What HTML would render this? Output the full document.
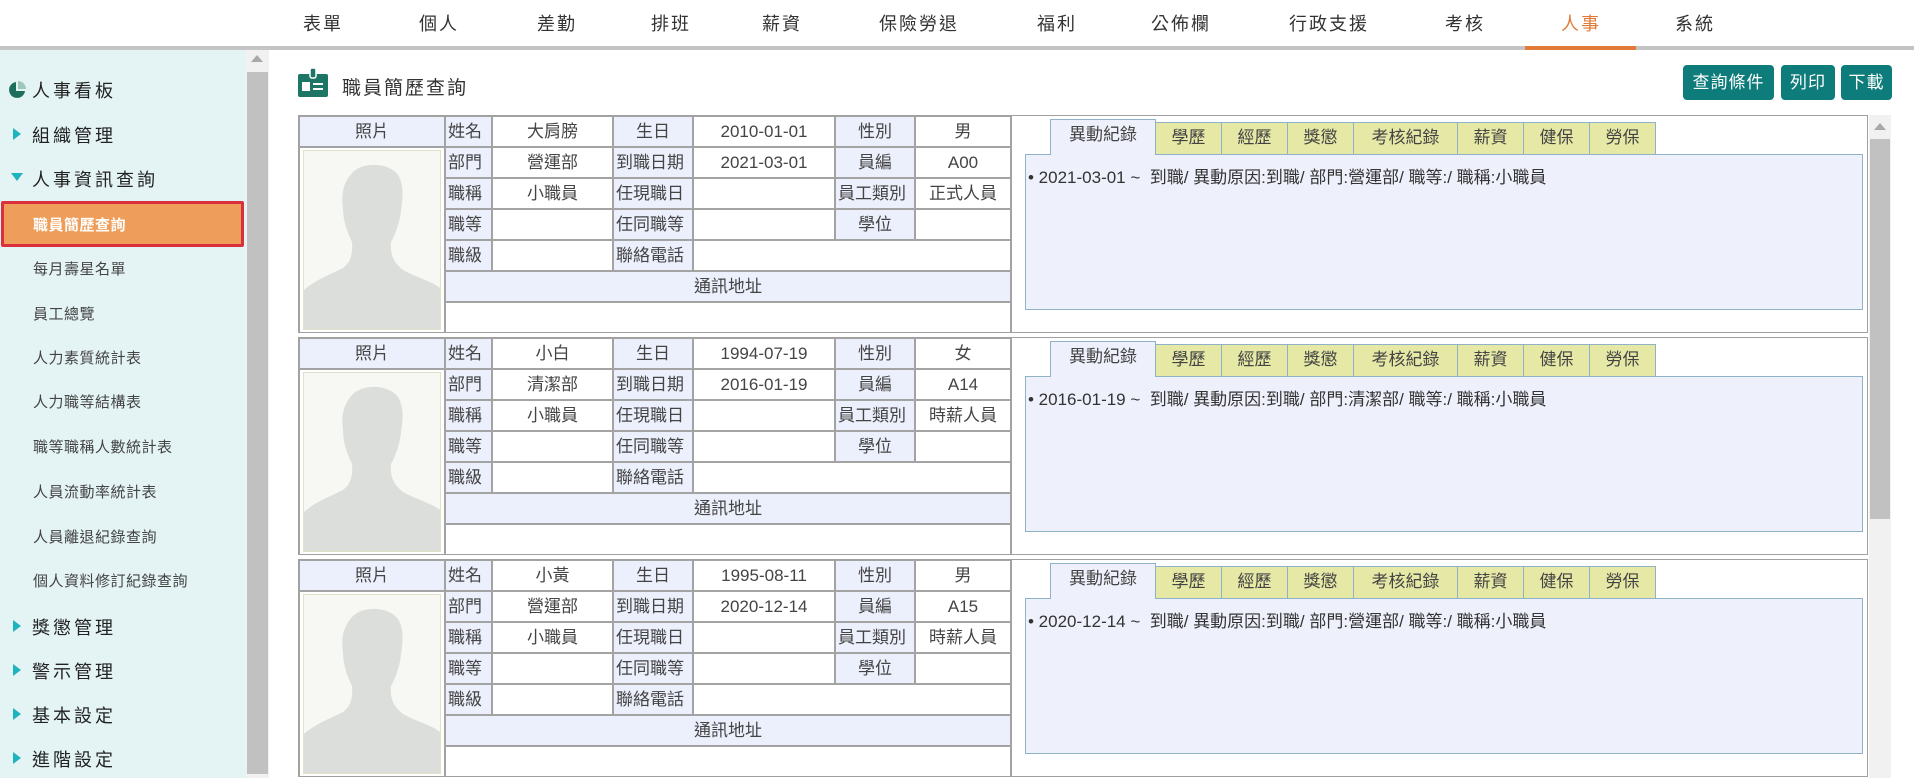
<!DOCTYPE html>
<html><head><meta charset="utf-8"><style>
*{box-sizing:border-box;margin:0;padding:0}
body{width:1914px;height:778px;overflow:hidden;background:#fff;font-family:"Liberation Sans","Noto Sans CJK TC",sans-serif;color:#333;position:relative}
.nav{position:absolute;top:0;left:0;width:1914px;height:46px}
.nav span{position:absolute;top:10px;font-size:18px;color:#333;transform:translateX(-50%);letter-spacing:2px;white-space:nowrap}
.navline{position:absolute;top:46px;left:0;width:1914px;height:4px;background:#c4c4c4}
.navact{position:absolute;top:46px;left:1525px;width:111px;height:4px;background:#e07b39}
.side{position:absolute;top:50px;left:0;width:246px;height:728px;background:#e4f4f5}
.side div{position:absolute;white-space:nowrap}
.m{left:32px;font-size:18px;color:#222;letter-spacing:3px}
.s{left:33px;font-size:15px;color:#444;letter-spacing:.5px}
.tri{position:absolute;left:13px;width:0;height:0;border-top:6px solid transparent;border-bottom:6px solid transparent;border-left:8px solid #1fb3bd}
.sb{position:absolute;top:50px;left:246px;width:23px;height:728px;background:#f1f1f1}
.sbt{position:absolute;top:72px;left:247px;width:21px;height:702px;background:#c1c1c1}
.btn{position:absolute;top:65px;height:35px;background:#0e7c7b;color:#fff;font-size:17px;border-radius:4px;text-align:center;line-height:35px;letter-spacing:1px}
.card{position:absolute;left:298px;width:1570px;height:218px;border:1px solid #a0a0a0;background:#fff;overflow:hidden}
table{border-collapse:collapse;position:absolute;left:-1px;top:-1px;table-layout:fixed}
td{border:2px solid #a3a3a3;height:31px;line-height:27px;font-size:17px;text-align:center;color:#444;white-space:nowrap;overflow:hidden;padding:0}
td.h{background:#eceffc}
td.l{text-align:left;padding-left:2px}
.tabs{position:absolute;left:751px;top:3px;height:35px}
.tab{position:absolute;top:3px;height:32px;background:#e6e8a6;border:1px solid #8fb2c9;border-bottom:none;font-size:17px;text-align:center;line-height:30px;color:#444}
.tab.a{top:0;height:36px;background:#eef0fc;z-index:2}
.box{position:absolute;left:726px;top:38px;width:838px;height:156px;background:#eef0fc;border:1px solid #8fb2c9;font-size:17px;color:#333;padding:8px 0 0 2px;white-space:nowrap}
</style></head><body>
<div class="nav">
<span style="left:323px">表單</span><span style="left:439px">個人</span><span style="left:557px">差勤</span><span style="left:671px">排班</span><span style="left:782px">薪資</span><span style="left:919px">保險勞退</span><span style="left:1057px">福利</span><span style="left:1181px">公佈欄</span><span style="left:1329px">行政支援</span><span style="left:1465px">考核</span><span style="left:1581px;color:#e07b39">人事</span><span style="left:1695px">系統</span>
</div>
<div class="navline"></div><div class="navact"></div>
<div class="side">
<svg style="position:absolute;left:7px;top:30px" width="20" height="20" viewBox="0 0 20 20"><path d="M9 2 A8 8 0 1 0 18 11 L9 11 Z" fill="#1d6e5c"/><path d="M11 1 A8 8 0 0 1 19 9 L11 9 Z" fill="#9cc8b9"/></svg>
<div class="m" style="top:27px">人事看板</div>
<div class="tri" style="top:78px"></div><div class="m" style="top:72px">組織管理</div>
<div style="position:absolute;left:11px;top:123px;width:0;height:0;border-left:6px solid transparent;border-right:6px solid transparent;border-top:8px solid #1fb3bd"></div>
<div class="m" style="top:116px">人事資訊查詢</div>
<div style="left:1px;top:151px;width:243px;height:46px;background:#ee9e5a;border:3px solid #d9303b;border-radius:2px"></div>
<div class="s" style="top:164px;color:#fff;font-weight:bold">職員簡歷查詢</div>
<div class="s" style="top:208px">每月壽星名單</div>
<div class="s" style="top:253px">員工總覽</div>
<div class="s" style="top:297px">人力素質統計表</div>
<div class="s" style="top:341px">人力職等結構表</div>
<div class="s" style="top:386px">職等職稱人數統計表</div>
<div class="s" style="top:431px">人員流動率統計表</div>
<div class="s" style="top:476px">人員離退紀錄查詢</div>
<div class="s" style="top:520px">個人資料修訂紀錄查詢</div>
<div class="tri" style="top:570px"></div><div class="m" style="top:564px">獎懲管理</div>
<div class="tri" style="top:614px"></div><div class="m" style="top:608px">警示管理</div>
<div class="tri" style="top:658px"></div><div class="m" style="top:652px">基本設定</div>
<div class="tri" style="top:702px"></div><div class="m" style="top:696px">進階設定</div>
</div>
<div class="sb"></div><div class="sbt"></div>
<div style="position:absolute;left:251px;top:55px;width:0;height:0;border-left:6px solid transparent;border-right:6px solid transparent;border-bottom:7px solid #a8a8a8"></div>
<svg style="position:absolute;left:298px;top:67px" width="30" height="30" viewBox="0 0 30 30"><rect x="0" y="7" width="30" height="23" rx="2" fill="#1d7565"/><rect x="12" y="1" width="6" height="10" rx="2" fill="#1d7565" stroke="#fff" stroke-width="1.5"/><rect x="4" y="15" width="8" height="9" fill="#fff"/><rect x="15" y="16" width="10" height="2" fill="#fff"/><rect x="15" y="21" width="10" height="2" fill="#fff"/></svg>
<div style="position:absolute;left:342px;top:73px;font-size:19px;color:#333;letter-spacing:2px">職員簡歷查詢</div>
<div class="btn" style="left:1683px;width:91px">查詢條件</div>
<div class="btn" style="left:1781px;width:54px">列印</div>
<div class="btn" style="left:1841px;width:51px">下載</div>
<div style="position:absolute;left:1869px;top:115px;width:22px;height:663px;background:#f1f1f1"></div>
<div style="position:absolute;left:1870px;top:139px;width:20px;height:380px;background:#c1c1c1"></div>
<div style="position:absolute;left:1874px;top:123px;width:0;height:0;border-left:6px solid transparent;border-right:6px solid transparent;border-bottom:7px solid #a8a8a8"></div>

<!-- card 1 -->
<div class="card" style="top:115px">
<table style="width:712px"><colgroup><col style="width:146px"><col style="width:47px"><col style="width:121px"><col style="width:80px"><col style="width:142px"><col style="width:80px"><col style="width:96px"></colgroup>
<tr><td class="h">照片</td><td class="h l">姓名</td><td>大肩膀</td><td class="h">生日</td><td>2010-01-01</td><td class="h">性別</td><td>男</td></tr>
<tr><td rowspan="6" style="padding:2px;vertical-align:top;line-height:0"><svg width="138" height="180" viewBox="0 0 138 180" preserveAspectRatio="none"><rect x="0.5" y="0.5" width="137" height="179" fill="#f7f7f3" stroke="#e2e2c8"/><path d="M50 22 C60 12 85 12 95 25 C101 35 100 48 98 60 C97 72 92 85 88 92 C87 104 90 112 100 120 C115 128 130 132 137 138 L137 179 L1 179 L1 140 C12 130 28 124 40 118 C48 112 50 103 49 92 C44 82 40 70 40 58 C38 45 40 32 50 22 Z" fill="#dcdedb"/></svg></td><td class="h l">部門</td><td>營運部</td><td class="h l">到職日期</td><td>2021-03-01</td><td class="h">員編</td><td>A00</td></tr>
<tr><td class="h l">職稱</td><td>小職員</td><td class="h l">任現職日</td><td></td><td class="h l">員工類別</td><td>正式人員</td></tr>
<tr><td class="h l">職等</td><td></td><td class="h l">任同職等</td><td></td><td class="h">學位</td><td></td></tr>
<tr><td class="h l">職級</td><td></td><td class="h l">聯絡電話</td><td colspan="3"></td></tr>
<tr><td class="h" colspan="6">通訊地址</td></tr>
<tr><td colspan="6"></td></tr>
</table>
<div class="tabs"><div class="tab a" style="left:0;width:106px">異動紀錄</div><div class="tab" style="left:105px;width:67px">學歷</div><div class="tab" style="left:171px;width:67px">經歷</div><div class="tab" style="left:237px;width:67px">獎懲</div><div class="tab" style="left:303px;width:105px">考核紀錄</div><div class="tab" style="left:407px;width:67px">薪資</div><div class="tab" style="left:473px;width:67px">健保</div><div class="tab" style="left:539px;width:67px">勞保</div></div>
<div class="box">• 2021-03-01 ~ &nbsp;到職/ 異動原因:到職/ 部門:營運部/ 職等:/ 職稱:小職員</div>
</div>

<!-- card 2 -->
<div class="card" style="top:337px">
<table style="width:712px"><colgroup><col style="width:146px"><col style="width:47px"><col style="width:121px"><col style="width:80px"><col style="width:142px"><col style="width:80px"><col style="width:96px"></colgroup>
<tr><td class="h">照片</td><td class="h l">姓名</td><td>小白</td><td class="h">生日</td><td>1994-07-19</td><td class="h">性別</td><td>女</td></tr>
<tr><td rowspan="6" style="padding:2px;vertical-align:top;line-height:0"><svg width="138" height="180" viewBox="0 0 138 180" preserveAspectRatio="none"><rect x="0.5" y="0.5" width="137" height="179" fill="#f7f7f3" stroke="#e2e2c8"/><path d="M50 22 C60 12 85 12 95 25 C101 35 100 48 98 60 C97 72 92 85 88 92 C87 104 90 112 100 120 C115 128 130 132 137 138 L137 179 L1 179 L1 140 C12 130 28 124 40 118 C48 112 50 103 49 92 C44 82 40 70 40 58 C38 45 40 32 50 22 Z" fill="#dcdedb"/></svg></td><td class="h l">部門</td><td>清潔部</td><td class="h l">到職日期</td><td>2016-01-19</td><td class="h">員編</td><td>A14</td></tr>
<tr><td class="h l">職稱</td><td>小職員</td><td class="h l">任現職日</td><td></td><td class="h l">員工類別</td><td>時薪人員</td></tr>
<tr><td class="h l">職等</td><td></td><td class="h l">任同職等</td><td></td><td class="h">學位</td><td></td></tr>
<tr><td class="h l">職級</td><td></td><td class="h l">聯絡電話</td><td colspan="3"></td></tr>
<tr><td class="h" colspan="6">通訊地址</td></tr>
<tr><td colspan="6"></td></tr>
</table>
<div class="tabs"><div class="tab a" style="left:0;width:106px">異動紀錄</div><div class="tab" style="left:105px;width:67px">學歷</div><div class="tab" style="left:171px;width:67px">經歷</div><div class="tab" style="left:237px;width:67px">獎懲</div><div class="tab" style="left:303px;width:105px">考核紀錄</div><div class="tab" style="left:407px;width:67px">薪資</div><div class="tab" style="left:473px;width:67px">健保</div><div class="tab" style="left:539px;width:67px">勞保</div></div>
<div class="box">• 2016-01-19 ~ &nbsp;到職/ 異動原因:到職/ 部門:清潔部/ 職等:/ 職稱:小職員</div>
</div>

<!-- card 3 -->
<div class="card" style="top:559px">
<table style="width:712px"><colgroup><col style="width:146px"><col style="width:47px"><col style="width:121px"><col style="width:80px"><col style="width:142px"><col style="width:80px"><col style="width:96px"></colgroup>
<tr><td class="h">照片</td><td class="h l">姓名</td><td>小黃</td><td class="h">生日</td><td>1995-08-11</td><td class="h">性別</td><td>男</td></tr>
<tr><td rowspan="6" style="padding:2px;vertical-align:top;line-height:0"><svg width="138" height="180" viewBox="0 0 138 180" preserveAspectRatio="none"><rect x="0.5" y="0.5" width="137" height="179" fill="#f7f7f3" stroke="#e2e2c8"/><path d="M50 22 C60 12 85 12 95 25 C101 35 100 48 98 60 C97 72 92 85 88 92 C87 104 90 112 100 120 C115 128 130 132 137 138 L137 179 L1 179 L1 140 C12 130 28 124 40 118 C48 112 50 103 49 92 C44 82 40 70 40 58 C38 45 40 32 50 22 Z" fill="#dcdedb"/></svg></td><td class="h l">部門</td><td>營運部</td><td class="h l">到職日期</td><td>2020-12-14</td><td class="h">員編</td><td>A15</td></tr>
<tr><td class="h l">職稱</td><td>小職員</td><td class="h l">任現職日</td><td></td><td class="h l">員工類別</td><td>時薪人員</td></tr>
<tr><td class="h l">職等</td><td></td><td class="h l">任同職等</td><td></td><td class="h">學位</td><td></td></tr>
<tr><td class="h l">職級</td><td></td><td class="h l">聯絡電話</td><td colspan="3"></td></tr>
<tr><td class="h" colspan="6">通訊地址</td></tr>
<tr><td colspan="6"></td></tr>
</table>
<div class="tabs"><div class="tab a" style="left:0;width:106px">異動紀錄</div><div class="tab" style="left:105px;width:67px">學歷</div><div class="tab" style="left:171px;width:67px">經歷</div><div class="tab" style="left:237px;width:67px">獎懲</div><div class="tab" style="left:303px;width:105px">考核紀錄</div><div class="tab" style="left:407px;width:67px">薪資</div><div class="tab" style="left:473px;width:67px">健保</div><div class="tab" style="left:539px;width:67px">勞保</div></div>
<div class="box">• 2020-12-14 ~ &nbsp;到職/ 異動原因:到職/ 部門:營運部/ 職等:/ 職稱:小職員</div>
</div>
</body></html>
